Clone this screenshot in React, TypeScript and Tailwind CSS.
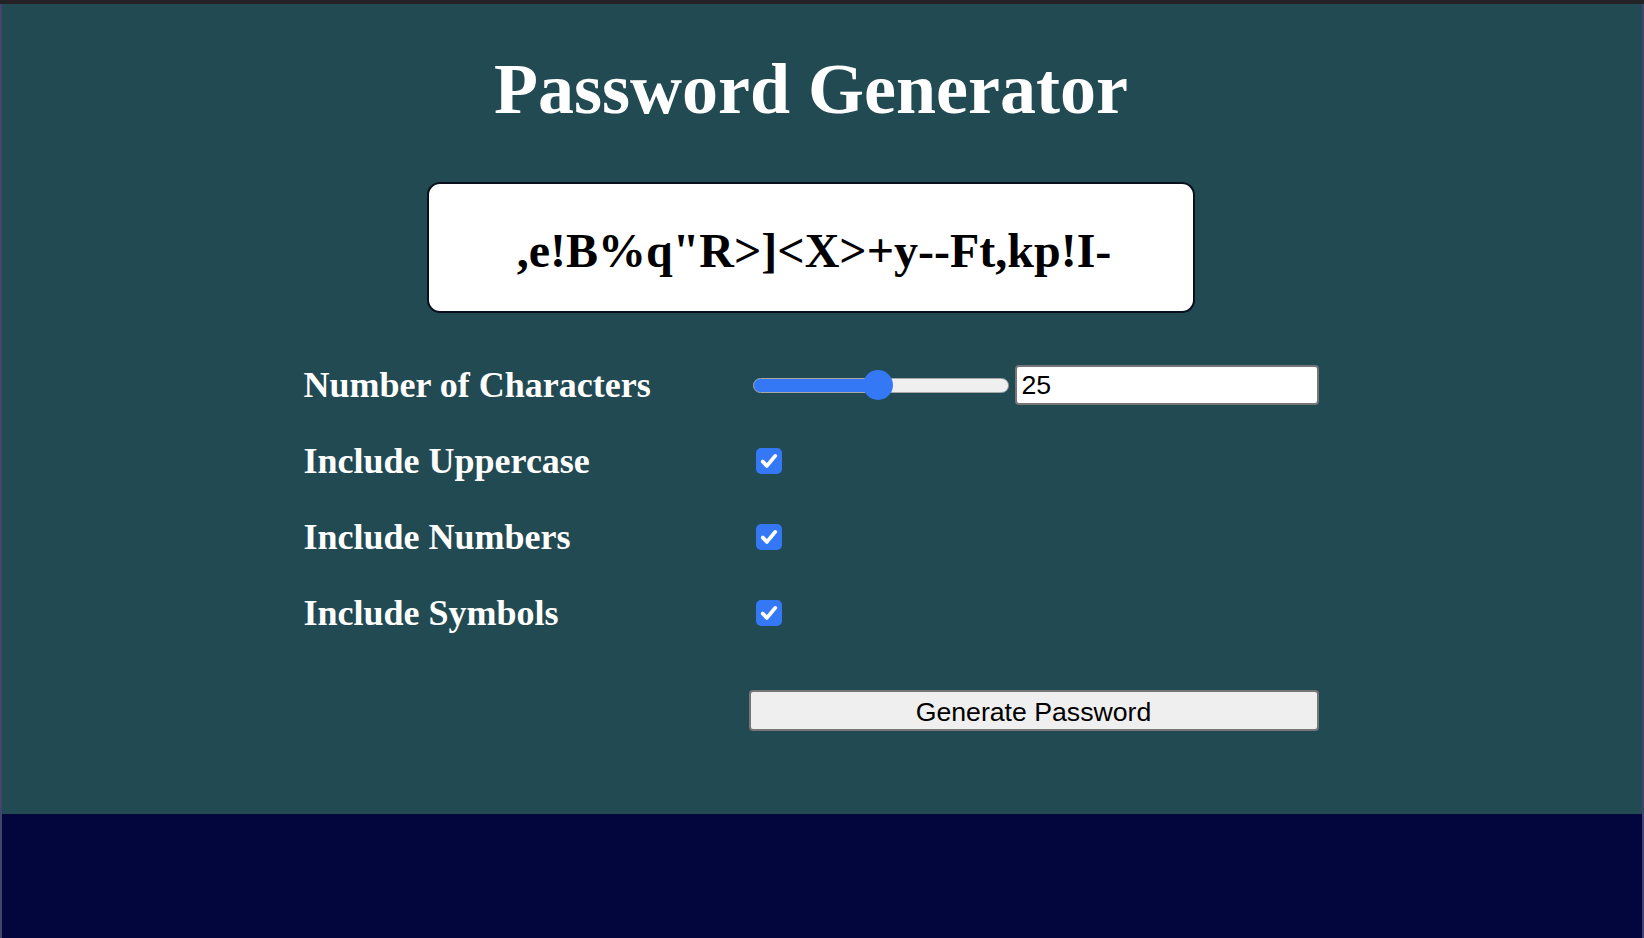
import React, { useState } from 'react';

const UPPER = 'ABCDEFGHIJKLMNOPQRSTUVWXYZ';
const LOWER = 'abcdefghijklmnopqrstuvwxyz';
const NUMBERS = '0123456789';
const SYMBOLS = '!"#$%&\'()*+,-./:;<=>?@[]^_{|}~';

const CheckIcon = () => (
  <svg viewBox="0 0 26 26" className="absolute inset-0 w-[26px] h-[26px] pointer-events-none" fill="none">
    <path d="M6.8 13.6 L10.9 17.9 L19.2 7.9" stroke="white" strokeWidth="3.8" strokeLinecap="round" strokeLinejoin="round" />
  </svg>
);

const Checkbox = ({ checked, onChange }: { checked: boolean; onChange: (v: boolean) => void }) => (
  <span className="relative ml-[7px] w-[26px] h-[26px] flex">
    <input
      type="checkbox"
      checked={checked}
      onChange={e => onChange(e.target.checked)}
      className="appearance-none w-[26px] h-[26px] rounded-[5px] bg-white border-2 border-[#767676] checked:bg-[#3478f6] checked:border-[#3478f6] cursor-pointer"
    />
    {checked && <CheckIcon />}
  </span>
);

const Row = ({ label, children }: { label: string; children: React.ReactNode }) => (
  <div className="flex items-center h-[76px]">
    <label className="w-[445px] text-[36px] font-bold text-white leading-none">{label}</label>
    <div className="w-[570px] flex items-center">{children}</div>
  </div>
);

const App: React.FC = () => {
  const [password, setPassword] = useState(',e!B%q"R>]<X>+y--Ft,kp!I-');
  const [length, setLength] = useState(25);
  const [upper, setUpper] = useState(true);
  const [numbers, setNumbers] = useState(true);
  const [symbols, setSymbols] = useState(true);

  const generate = () => {
    let chars = LOWER;
    if (upper) chars += UPPER;
    if (numbers) chars += NUMBERS;
    if (symbols) chars += SYMBOLS;
    let out = '';
    for (let i = 0; i < length; i++) out += chars[Math.floor(Math.random() * chars.length)];
    setPassword(out);
  };

  // thumb is 30px on a 256px track, fill runs to the thumb centre
  const pct = ((15 + ((length - 1) / 49) * 226) / 256) * 100;

  return (
    <div className="min-h-screen flex flex-col bg-[#03063c] font-['Liberation_Serif',serif]">
      <div className="h-[4px] bg-[#242127]" />
      <div className="flex-1 flex flex-col border-x-2 border-white/25">
        {/* Main panel */}
        <div className="bg-[#224a52] pt-[49px] pb-[83px] pr-[22px] flex flex-col items-center">
          <h1 className="text-[72px] font-bold text-white leading-none">Password Generator</h1>

          <div className="mt-[57px] w-[768px] h-[131px] bg-white border-2 border-[#0a0f1e] rounded-[13px] flex items-center justify-center">
            <span className="text-[48px] font-bold text-black leading-none pt-[6px] pl-[6px]">{password}</span>
          </div>

          <div className="mt-[34px] flex flex-col">
            <Row label="Number of Characters">
              <input
                type="range"
                min={1}
                max={50}
                value={length}
                onChange={e => setLength(Number(e.target.value))}
                style={{ background: `linear-gradient(to right, #3478f6 ${pct}%, #efefef ${pct}%)` }}
                className="appearance-none ml-[4px] w-[256px] h-[15px] rounded-full border border-[#a8a8a8] cursor-pointer [&::-webkit-slider-thumb]:appearance-none [&::-webkit-slider-thumb]:w-[30px] [&::-webkit-slider-thumb]:h-[30px] [&::-webkit-slider-thumb]:rounded-full [&::-webkit-slider-thumb]:bg-[#3478f6]"
              />
              <input
                type="number"
                value={length}
                onChange={e => setLength(Number(e.target.value))}
                className="ml-[6px] w-[304px] h-[40px] bg-white border-2 border-[#767676] rounded-[4px] px-[5px] text-[26.67px] text-black font-['Liberation_Sans',sans-serif] outline-none [appearance:textfield] [&::-webkit-inner-spin-button]:appearance-none"
              />
            </Row>
            <Row label="Include Uppercase">
              <Checkbox checked={upper} onChange={setUpper} />
            </Row>
            <Row label="Include Numbers">
              <Checkbox checked={numbers} onChange={setNumbers} />
            </Row>
            <Row label="Include Symbols">
              <Checkbox checked={symbols} onChange={setSymbols} />
            </Row>
            <div className="flex mt-[39px]">
              <div className="w-[445px]" />
              <button
                onClick={generate}
                className="w-[570px] h-[41px] bg-[#efefef] border-2 border-[#767676] rounded-[4px] text-[26.67px] text-black font-['Liberation_Sans',sans-serif] cursor-pointer"
              >
                Generate Password
              </button>
            </div>
          </div>
        </div>
        <div className="flex-1" />
      </div>
    </div>
  );
};

export default App;
